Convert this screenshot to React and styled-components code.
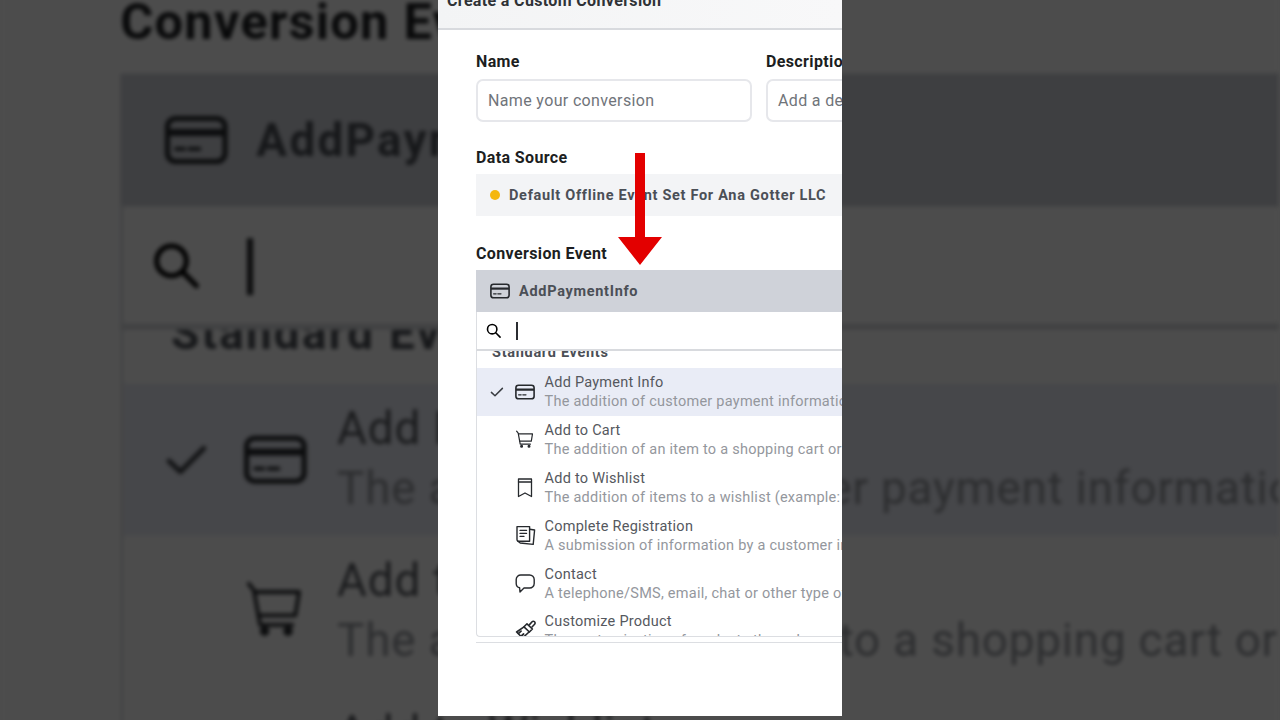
import React from 'react';
import styled, { createGlobalStyle } from 'styled-components';

const GlobalStyle = createGlobalStyle`
	html, body {
		margin: 0;
		height: 100%;
		background: #4d4d4d;
		overflow: hidden;
	}
	* {
		box-sizing: border-box;
	}
`;

const Stage = styled.div`
	position: relative;
	width: 1280px;
	height: 720px;
	overflow: hidden;
	display: flex;
	justify-content: center;
	font-family: Roboto, 'Liberation Sans', sans-serif;
`;

// same panel blown up behind the real one, the way a vertical video gets padded
const Backdrop = styled.div`
	position: absolute;
	left: 0;
	top: -781px;
	transform: scale(3.165);
	transform-origin: 0 0;
	filter: blur(0.6px) brightness(0.3);
`;

const Panel = styled.div`
	position: relative;
	width: 404px;
	height: 716px;
	background: #fff;
	overflow: hidden;
	flex: none;
`;

const PanelWrap = styled.div`
	height: 716px;
	box-shadow: 0 1px 0 #7c7c7c;
`;

const Header = styled.header`
	height: 30px;
	padding: 0 0 19px 9px;
	display: flex;
	align-items: flex-end;
	background: linear-gradient(90deg, #f3f4f5, #f8f8f9);
	border-bottom: 2px solid #d8dade;
	font-size: 16px;
	line-height: 17px;
	font-weight: 700;
	letter-spacing: 0.35px;
	color: #2f3236;
	white-space: nowrap;
`;

const Form = styled.div`
	padding: 23px 0 0 38px;
	display: flex;
	flex-direction: column;
	width: 760px;
`;

const Label = styled.div`
	font-size: 16px;
	line-height: 18px;
	font-weight: 700;
	letter-spacing: 0.37px;
	color: #1c1e21;
	margin-bottom: 8px;
`;

const FieldRow = styled.div`
	display: flex;
	gap: 14px;
	margin-bottom: 27px;
`;

const Field = styled.div`
	width: 276px;
`;

const Input = styled.div`
	height: 43px;
	padding: 0 10px;
	display: flex;
	align-items: center;
	border: 2px solid #e6e7eb;
	border-radius: 7px;
	font-size: 16px;
	letter-spacing: 0.35px;
	color: #70747a;
	white-space: nowrap;
`;

const SourceBox = styled.div`
	height: 42px;
	margin-top: -1px;
	margin-bottom: 29px;
	padding-left: 14px;
	display: flex;
	align-items: center;
	gap: 9px;
	background: #f3f4f6;
	font-size: 14.5px;
	font-weight: 700;
	letter-spacing: 0.7px;
	color: #4b4f56;
`;

const Dot = styled.span`
	width: 10px;
	height: 10px;
	border-radius: 50%;
	background: #f5b70f;
`;

const Select = styled.div`
	height: 42px;
	margin-top: -1px;
	padding-left: 14px;
	display: flex;
	align-items: center;
	gap: 9px;
	background: #cfd2d9;
	font-size: 14.5px;
	font-weight: 700;
	letter-spacing: 0.7px;
	color: #4b4f56;

	svg {
		color: #26292d;
	}
`;

const Search = styled.div`
	height: 39px;
	padding-left: 9px;
	display: flex;
	align-items: center;
	gap: 15px;
	border-left: 1px solid #dcdee2;
	border-bottom: 2px solid #d8dade;
`;

const Caret = styled.span`
	width: 1.5px;
	height: 18px;
	background: #2b2d31;
`;

const Dropdown = styled.div`
	height: 286px;
	overflow: hidden;
	border: 1.5px solid #dcdee2;
	border-top: 0;
	border-right: 0;
	border-radius: 0 0 0 4px;
`;

const SectionTitle = styled.div`
	height: 17px;
	padding: 0 0 7px 15px;
	font-size: 14.5px;
	line-height: 17px;
	font-weight: 700;
	letter-spacing: 0.7px;
	color: #4b4f56;
	white-space: nowrap;
	display: flex;
	align-items: flex-end;
`;

const Row = styled.div`
	height: 47.9px;
	display: flex;
	align-items: center;
	background: ${(p) => (p.$active ? '#e9ecf6' : 'transparent')};
`;

const CheckSlot = styled.div`
	width: 37.5px;
	padding-left: 11.5px;
	display: flex;
	flex: none;
	color: #3a3d42;
`;

const IconSlot = styled.div`
	width: 30px;
	display: flex;
	flex: none;
	color: #26292d;
`;

const RowText = styled.div`
	white-space: nowrap;
`;

const RowTitle = styled.div`
	font-size: 14.5px;
	line-height: 19px;
	letter-spacing: 0.25px;
	color: #55585e;
`;

const RowSub = styled.div`
	font-size: 14.5px;
	line-height: 19px;
	letter-spacing: 0.25px;
	color: #94979d;
`;

const Underline = styled.div`
	height: 1px;
	margin-top: 5px;
	background: #dcdee2;
`;

const Arrow = styled.svg`
	position: absolute;
	left: 179px;
	top: 153px;
`;

const IconSvg = styled.svg`
	flex: none;
	overflow: visible;
`;

const Icon = ({ size = 20, children, box = '0 0 20 20', weight = 1.4 }) => (
	<IconSvg width={size} height={size} viewBox={box} fill="none" stroke="currentColor" strokeWidth={weight} strokeLinecap="round" strokeLinejoin="round">
		{children}
	</IconSvg>
);

const CardIcon = () => (
	<Icon weight={1.6}>
		<rect x="0.9" y="3.2" width="18.2" height="13.6" rx="2.6" />
		<path d="M1 7.6h18" strokeWidth="2.2" strokeLinecap="butt" />
		<path d="M3.6 12.8h2.6M7.8 12.8h3.2" strokeWidth="1.2" />
	</Icon>
);

const CartIcon = () => (
	<Icon weight={1.2}>
		<path d="M1.6 1.2l1.6 2 2 11h10.2" />
		<path d="M3.5 3.8h14l-1.2 7.4H4.7" />
		<circle cx="6.6" cy="16.2" r="0.9" fill="currentColor" />
		<circle cx="14" cy="16.2" r="0.9" fill="currentColor" />
	</Icon>
);

const BookmarkIcon = () => (
	<Icon weight={1.3}>
		<path d="M3.5 1h13v17.5l-6.5-3.5-6.5 3.5z" />
		<path d="M3.5 4h13" />
	</Icon>
);

const RegistrationIcon = () => (
	<Icon>
		<path d="M2 0.6h12.6v14.6H3.8A1.8 1.8 0 0 1 2 13.4z" />
		<path d="M14.6 3.2l5 .8-1.4 14.4-13-1.4-2.6-2" />
		<path d="M5 4.4h6.6M5 7.4h6.6M5 10.4h4" strokeWidth="1.2" />
	</Icon>
);

const BubbleIcon = () => (
	<Icon>
		<path d="M6 1h8.6a4.6 4.6 0 0 1 4.6 4.6v3.8a4.6 4.6 0 0 1-4.6 4.6H9L5 18l-.4-4.2A4.6 4.6 0 0 1 1.2 9.4V5.6A4.6 4.6 0 0 1 6 1z" />
	</Icon>
);

const BrushIcon = () => (
	<Icon weight={1.6}>
		<path d="M14.5 3.6l2.6-2.8a1.7 1.7 0 0 1 2.5 2.4L17 6" />
		<path d="M12 2.8l5.4 5.2-3 3-5.4-5.2z" />
		<path d="M9 5.8L1.6 11l6 6 6.4-6" />
		<path d="M3.6 12.4l2.4-2.2M6.4 15l2.2-2" strokeWidth="1.8" />
	</Icon>
);

const EVENTS = [
	{ id: 'payment', title: 'Add Payment Info', sub: 'The addition of customer payment information', icon: <CardIcon />, active: true },
	{ id: 'cart', title: 'Add to Cart', sub: 'The addition of an item to a shopping cart or', icon: <CartIcon /> },
	{ id: 'wishlist', title: 'Add to Wishlist', sub: 'The addition of items to a wishlist (example:', icon: <BookmarkIcon /> },
	{ id: 'registration', title: 'Complete Registration', sub: 'A submission of information by a customer in', icon: <RegistrationIcon /> },
	{ id: 'contact', title: 'Contact', sub: 'A telephone/SMS, email, chat or other type of', icon: <BubbleIcon /> },
	{ id: 'customize', title: 'Customize Product', sub: 'The customization of products through a', icon: <BrushIcon /> },
];

function ConversionPanel({ children }) {
	return (
		<Panel>
			<Header>Create a Custom Conversion</Header>
			<Form>
				<FieldRow>
					<Field>
						<Label>Name</Label>
						<Input>Name your conversion</Input>
					</Field>
					<Field>
						<Label>Description</Label>
						<Input>Add a description</Input>
					</Field>
				</FieldRow>
				<Label>Data Source</Label>
				<SourceBox>
					<Dot />
					Default Offline Event Set For Ana Gotter LLC
				</SourceBox>
				<Label>Conversion Event</Label>
				<Select>
					<CardIcon />
					AddPaymentInfo
				</Select>
				<Search>
					<Icon size={15} box="0 0 16 16" weight={1.7}>
						<circle cx="6.6" cy="6.6" r="5" />
						<path d="M10.4 10.4l4.6 4.6" />
					</Icon>
					<Caret />
				</Search>
				<Dropdown>
					<SectionTitle>Standard Events</SectionTitle>
					{EVENTS.map((event) => (
						<Row key={event.id} $active={event.active}>
							<CheckSlot>
								{event.active && (
									<Icon size={16} box="0 0 16 16" weight={1.5}>
										<path d="M2.4 8.4l3.6 3.4 7.4-7.4" />
									</Icon>
								)}
							</CheckSlot>
							<IconSlot>{event.icon}</IconSlot>
							<RowText>
								<RowTitle>{event.title}</RowTitle>
								<RowSub>{event.sub}</RowSub>
							</RowText>
						</Row>
					))}
				</Dropdown>
				<Underline />
			</Form>
			{children}
		</Panel>
	);
}

export default function App() {
	return (
		<Stage>
			<GlobalStyle />
			<Backdrop aria-hidden="true">
				<ConversionPanel />
			</Backdrop>
			<PanelWrap>
				<ConversionPanel>
					<Arrow width="46" height="113" viewBox="0 0 46 113">
						<path d="M18 0h10v84h17L23 112 1 84h17z" fill="#e30000" />
					</Arrow>
				</ConversionPanel>
			</PanelWrap>
		</Stage>
	);
}
